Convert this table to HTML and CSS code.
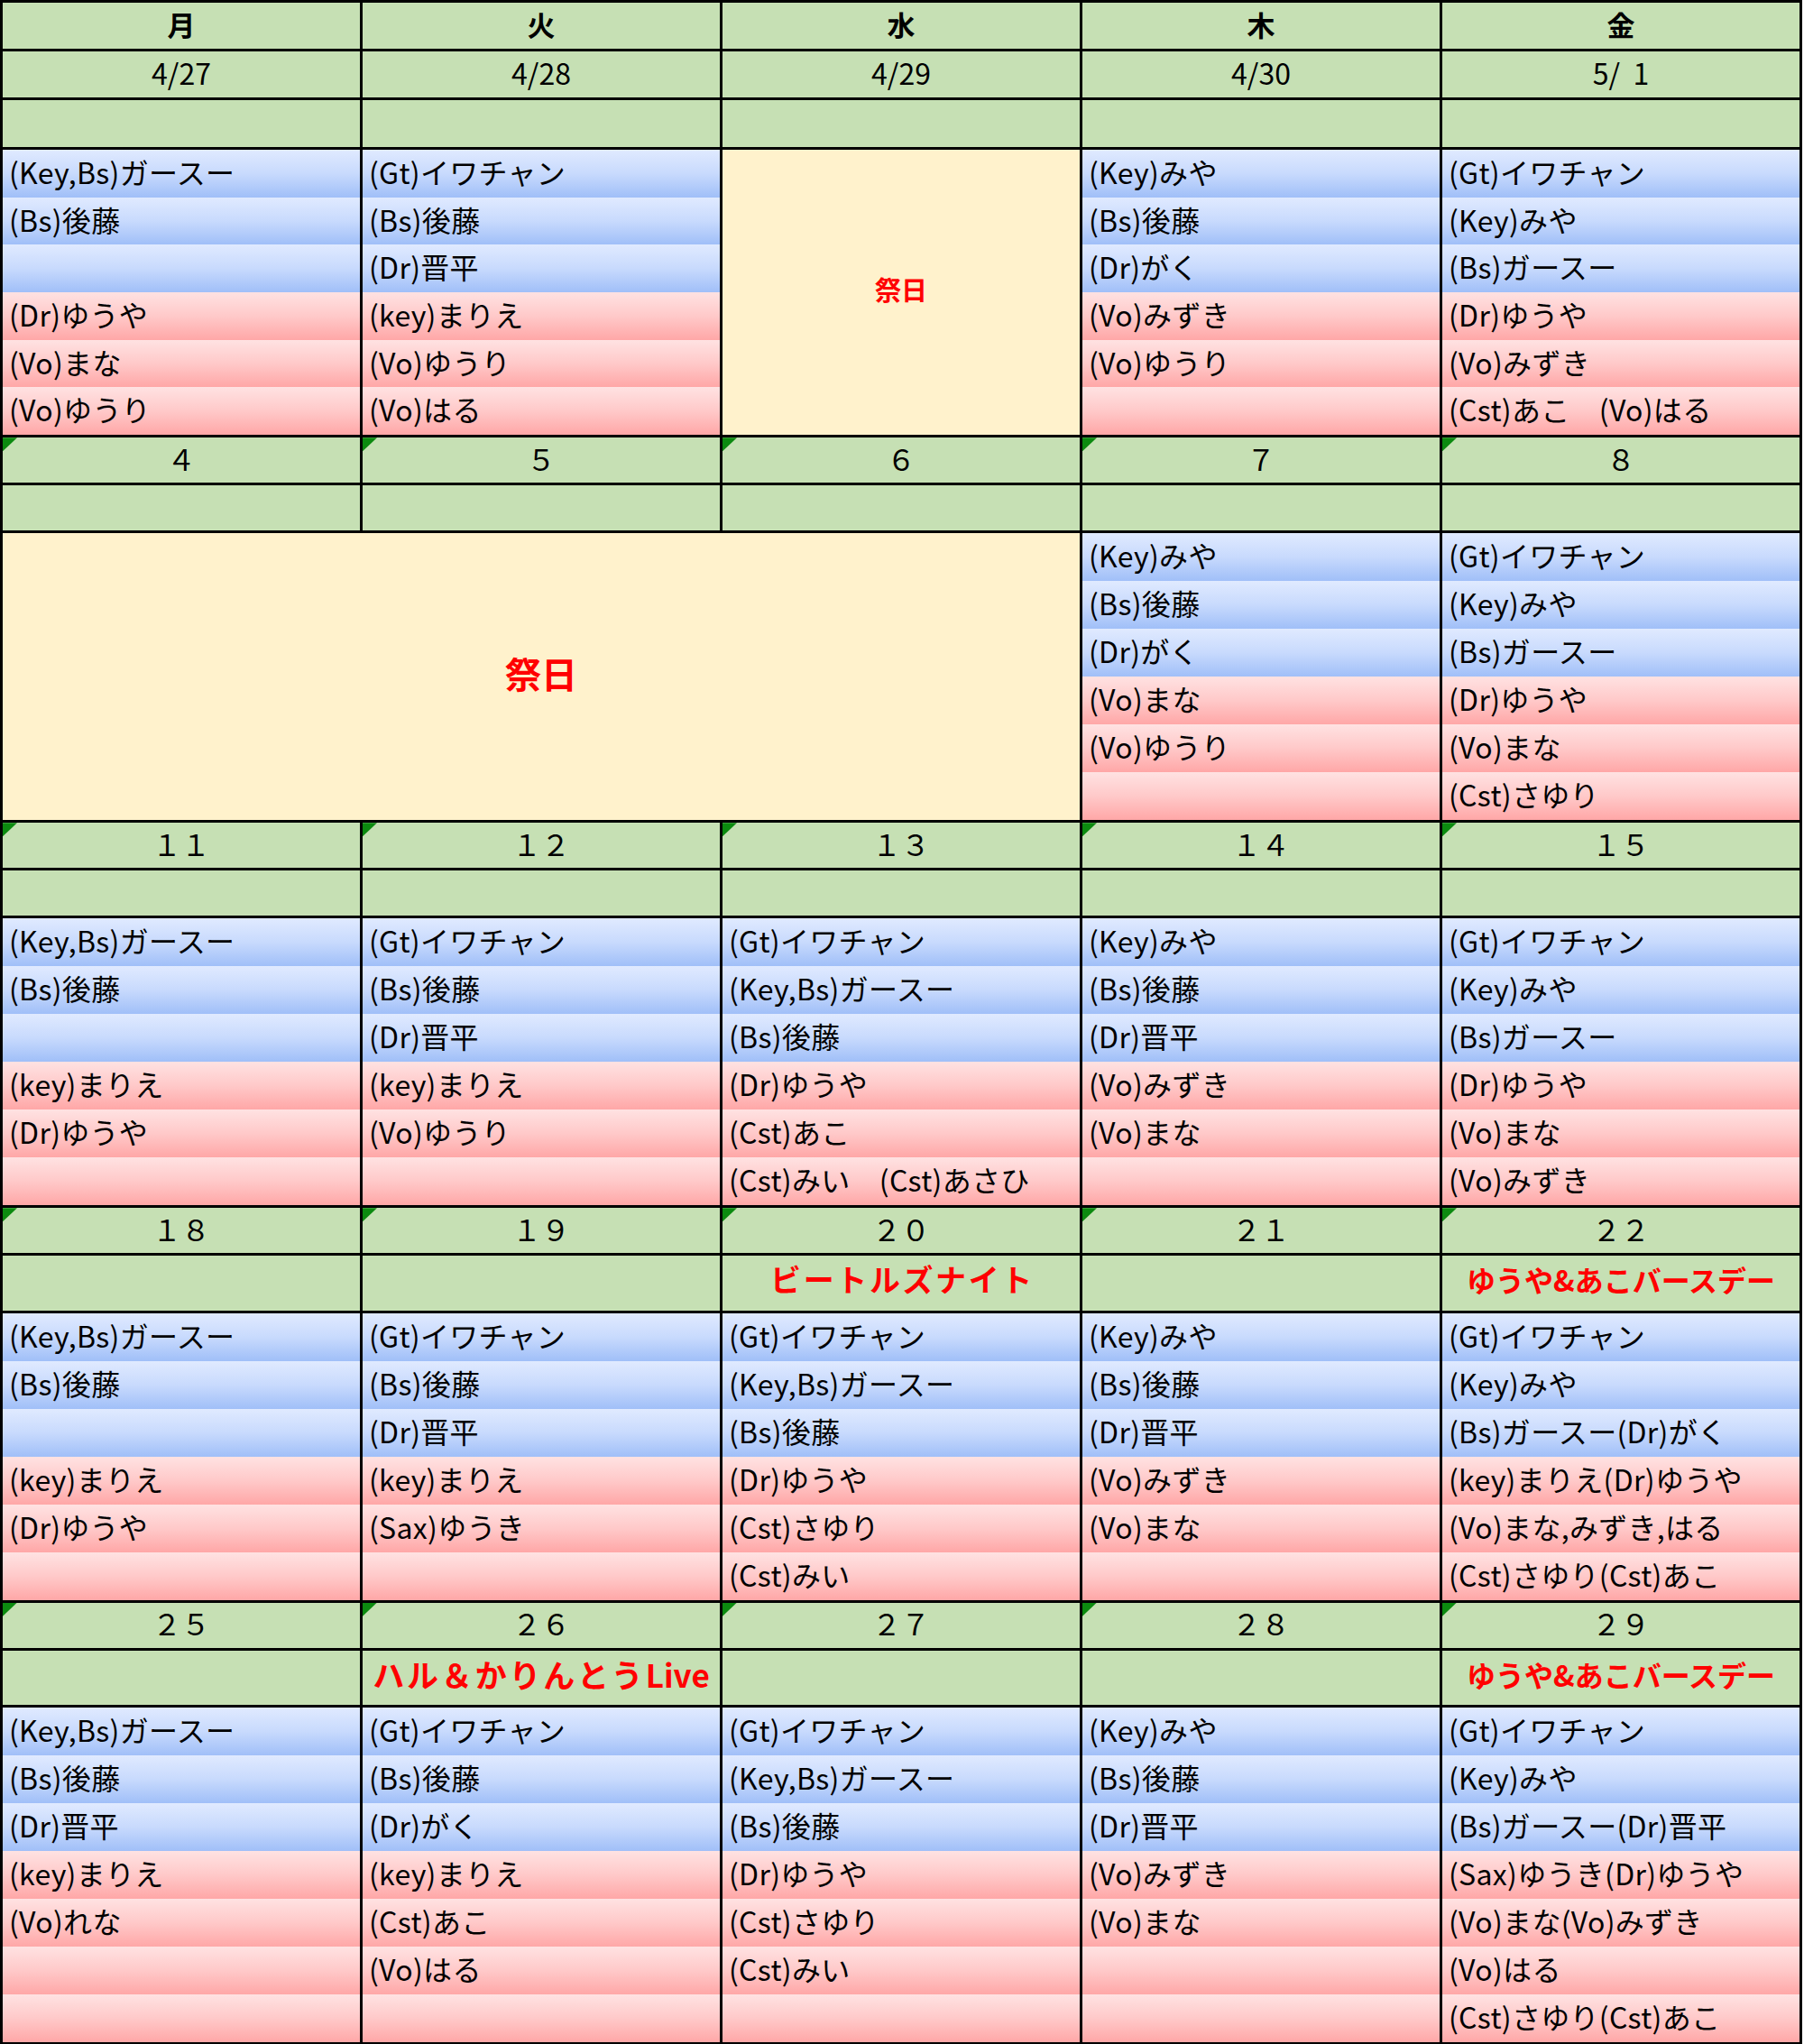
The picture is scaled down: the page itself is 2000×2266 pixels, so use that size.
FILE: index.html
```html
<!DOCTYPE html>
<html lang="ja">
<head>
<meta charset="utf-8">
<title>スケジュール</title>
<link rel="stylesheet" href="styles.css">
</head>
<body>
<div class="cal">

  <!-- week 1 -->
  <div class="week wk1">
    <div class="c hd">月</div><div class="c dt">4/27</div><div class="c ev"></div>
    <div class="c b">(Key,Bs)ガースー</div><div class="c b">(Bs)後藤</div><div class="c b"></div>
    <div class="c p">(Dr)ゆうや</div><div class="c p">(Vo)まな</div><div class="c p">(Vo)ゆうり</div>

    <div class="c hd">火</div><div class="c dt">4/28</div><div class="c ev"></div>
    <div class="c b">(Gt)イワチャン</div><div class="c b">(Bs)後藤</div><div class="c b">(Dr)晋平</div>
    <div class="c p">(key)まりえ</div><div class="c p">(Vo)ゆうり</div><div class="c p">(Vo)はる</div>

    <div class="c hd">水</div><div class="c dt">4/29</div><div class="c ev"></div>
    <div class="c hol hol-w1">祭日</div>

    <div class="c hd">木</div><div class="c dt">4/30</div><div class="c ev"></div>
    <div class="c b">(Key)みや</div><div class="c b">(Bs)後藤</div><div class="c b">(Dr)がく</div>
    <div class="c p">(Vo)みずき</div><div class="c p">(Vo)ゆうり</div><div class="c p"></div>

    <div class="c hd">金</div><div class="c dt">5/&nbsp;&nbsp;1</div><div class="c ev"></div>
    <div class="c b">(Gt)イワチャン</div><div class="c b">(Key)みや</div><div class="c b">(Bs)ガースー</div>
    <div class="c p">(Dr)ゆうや</div><div class="c p">(Vo)みずき</div><div class="c p">(Cst)あこ　(Vo)はる</div>
  </div>

  <!-- week 2 -->
  <div class="week wk">
    <div class="c dt tri">４</div><div class="c ev"></div>
    <div class="c hol hol-w2">祭日</div>
    <div class="c dt tri">５</div><div class="c ev"></div>
    <div class="c dt tri">６</div><div class="c ev"></div>

    <div class="c dt tri">７</div><div class="c ev"></div>
    <div class="c b">(Key)みや</div><div class="c b">(Bs)後藤</div><div class="c b">(Dr)がく</div>
    <div class="c p">(Vo)まな</div><div class="c p">(Vo)ゆうり</div><div class="c p"></div>

    <div class="c dt tri">８</div><div class="c ev"></div>
    <div class="c b">(Gt)イワチャン</div><div class="c b">(Key)みや</div><div class="c b">(Bs)ガースー</div>
    <div class="c p">(Dr)ゆうや</div><div class="c p">(Vo)まな</div><div class="c p">(Cst)さゆり</div>
  </div>

  <!-- week 3 -->
  <div class="week wk">
    <div class="c dt tri">１１</div><div class="c ev"></div>
    <div class="c b">(Key,Bs)ガースー</div><div class="c b">(Bs)後藤</div><div class="c b"></div>
    <div class="c p">(key)まりえ</div><div class="c p">(Dr)ゆうや</div><div class="c p"></div>

    <div class="c dt tri">１２</div><div class="c ev"></div>
    <div class="c b">(Gt)イワチャン</div><div class="c b">(Bs)後藤</div><div class="c b">(Dr)晋平</div>
    <div class="c p">(key)まりえ</div><div class="c p">(Vo)ゆうり</div><div class="c p"></div>

    <div class="c dt tri">１３</div><div class="c ev"></div>
    <div class="c b">(Gt)イワチャン</div><div class="c b">(Key,Bs)ガースー</div><div class="c b">(Bs)後藤</div>
    <div class="c p">(Dr)ゆうや</div><div class="c p">(Cst)あこ</div><div class="c p">(Cst)みい　(Cst)あさひ</div>

    <div class="c dt tri">１４</div><div class="c ev"></div>
    <div class="c b">(Key)みや</div><div class="c b">(Bs)後藤</div><div class="c b">(Dr)晋平</div>
    <div class="c p">(Vo)みずき</div><div class="c p">(Vo)まな</div><div class="c p"></div>

    <div class="c dt tri">１５</div><div class="c ev"></div>
    <div class="c b">(Gt)イワチャン</div><div class="c b">(Key)みや</div><div class="c b">(Bs)ガースー</div>
    <div class="c p">(Dr)ゆうや</div><div class="c p">(Vo)まな</div><div class="c p">(Vo)みずき</div>
  </div>

  <!-- week 4 -->
  <div class="week wk4">
    <div class="c dt tri">１８</div><div class="c ev"></div>
    <div class="c b">(Key,Bs)ガースー</div><div class="c b">(Bs)後藤</div><div class="c b"></div>
    <div class="c p">(key)まりえ</div><div class="c p">(Dr)ゆうや</div><div class="c p"></div>

    <div class="c dt tri">１９</div><div class="c ev"></div>
    <div class="c b">(Gt)イワチャン</div><div class="c b">(Bs)後藤</div><div class="c b">(Dr)晋平</div>
    <div class="c p">(key)まりえ</div><div class="c p">(Sax)ゆうき</div><div class="c p"></div>

    <div class="c dt tri">２０</div><div class="c ev"><span class="evt beatles">ビートルズナイト</span></div>
    <div class="c b">(Gt)イワチャン</div><div class="c b">(Key,Bs)ガースー</div><div class="c b">(Bs)後藤</div>
    <div class="c p">(Dr)ゆうや</div><div class="c p">(Cst)さゆり</div><div class="c p">(Cst)みい</div>

    <div class="c dt tri">２１</div><div class="c ev"></div>
    <div class="c b">(Key)みや</div><div class="c b">(Bs)後藤</div><div class="c b">(Dr)晋平</div>
    <div class="c p">(Vo)みずき</div><div class="c p">(Vo)まな</div><div class="c p"></div>

    <div class="c dt tri">２２</div><div class="c ev"><span class="evt">ゆうや&amp;あこバースデー</span></div>
    <div class="c b">(Gt)イワチャン</div><div class="c b">(Key)みや</div><div class="c b">(Bs)ガースー(Dr)がく</div>
    <div class="c p">(key)まりえ(Dr)ゆうや</div><div class="c p">(Vo)まな,みずき,はる</div><div class="c p">(Cst)さゆり(Cst)あこ</div>
  </div>

  <!-- week 5 -->
  <div class="week wk5">
    <div class="c dt tri">２５</div><div class="c ev"></div>
    <div class="c b">(Key,Bs)ガースー</div><div class="c b">(Bs)後藤</div><div class="c b">(Dr)晋平</div>
    <div class="c p">(key)まりえ</div><div class="c p">(Vo)れな</div><div class="c p"></div><div class="c p"></div>

    <div class="c dt tri">２６</div><div class="c ev"><span class="evt live"><span class="jp">ハル＆かりんとう</span>Live</span></div>
    <div class="c b">(Gt)イワチャン</div><div class="c b">(Bs)後藤</div><div class="c b">(Dr)がく</div>
    <div class="c p">(key)まりえ</div><div class="c p">(Cst)あこ</div><div class="c p">(Vo)はる</div><div class="c p"></div>

    <div class="c dt tri">２７</div><div class="c ev"></div>
    <div class="c b">(Gt)イワチャン</div><div class="c b">(Key,Bs)ガースー</div><div class="c b">(Bs)後藤</div>
    <div class="c p">(Dr)ゆうや</div><div class="c p">(Cst)さゆり</div><div class="c p">(Cst)みい</div><div class="c p"></div>

    <div class="c dt tri">２８</div><div class="c ev"></div>
    <div class="c b">(Key)みや</div><div class="c b">(Bs)後藤</div><div class="c b">(Dr)晋平</div>
    <div class="c p">(Vo)みずき</div><div class="c p">(Vo)まな</div><div class="c p"></div><div class="c p"></div>

    <div class="c dt tri">２９</div><div class="c ev"><span class="evt">ゆうや&amp;あこバースデー</span></div>
    <div class="c b">(Gt)イワチャン</div><div class="c b">(Key)みや</div><div class="c b">(Bs)ガースー(Dr)晋平</div>
    <div class="c p">(Sax)ゆうき(Dr)ゆうや</div><div class="c p">(Vo)まな(Vo)みずき</div><div class="c p">(Vo)はる</div><div class="c p">(Cst)さゆり(Cst)あこ</div>
  </div>

</div>
</body>
</html>
```

FILE: styles.css
```css
html, body {
  margin: 0;
  padding: 0;
  background: #ffffff;
}

body {
  font-family: "Noto Sans CJK JP", "Noto Sans", sans-serif;
  color: #000;
}

.cal {
  box-sizing: border-box;
  width: 1998px;
  border: 3px solid #000;
  background: #000;
}

.week {
  display: grid;
  grid-template-columns: repeat(5, 1fr);
  grid-auto-flow: column;
  column-gap: 3px;
  background: #000;
}

.week + .week {
  border-top: 3px solid #000;
}

.wk1 { grid-template-rows: 54px 54px 55px repeat(6, 52.7px); }
.wk  { grid-template-rows: repeat(8, 53px); }
.wk4 { grid-template-rows: 53px 63.5px repeat(6, 53px); }
.wk5 { grid-template-rows: 53px 63.5px repeat(7, 53px); }

.c {
  box-sizing: border-box;
  display: flex;
  align-items: center;
  min-width: 0;
  overflow: hidden;
  white-space: nowrap;
  font-size: 32px;
  line-height: 1;
  padding-bottom: 5px;
}

.hd, .dt, .ev {
  justify-content: center;
  background: #c6e0b4;
  border-bottom: 3px solid #000;
}

.hd {
  font-weight: 700;
  font-size: 31px;
}

.dt {
  position: relative;
  font-size: 32px;
}

.tri::before {
  content: "";
  position: absolute;
  left: 0;
  top: 0;
  width: 16px;
  height: 15px;
  background: #0c8a10;
  clip-path: polygon(0 0, 100% 0, 0 100%);
}

.ev {
  padding-bottom: 8px;
}

.evt {
  color: #ff0000;
  font-weight: 700;
  font-size: 32px;
}

.evt.beatles {
  font-size: 34px;
  letter-spacing: 2.6px;
  padding-left: 3px;
}

.evt.live {
  font-size: 35px;
}

.evt.live .jp {
  letter-spacing: 2.8px;
}

.b, .p {
  padding-left: 7px;
  letter-spacing: 0.3px;
}

.b {
  background: linear-gradient(to bottom, #e0eaff 0%, #c8dafd 50%, #a0bff8 100%);
}

.p {
  background: linear-gradient(to bottom, #ffe2e2 0%, #ffc9c9 50%, #ffa7a7 100%);
}

.hol {
  justify-content: center;
  background: #fff2cc;
  color: #ff0000;
  font-weight: 700;
}

.hol-w1 {
  grid-column: 3;
  grid-row: 4 / span 6;
  font-size: 29px;
  padding-bottom: 8px;
}

.hol-w2 {
  grid-column: 1 / span 3;
  grid-row: 3 / span 6;
  font-size: 40px;
  padding-bottom: 8px;
}
```
